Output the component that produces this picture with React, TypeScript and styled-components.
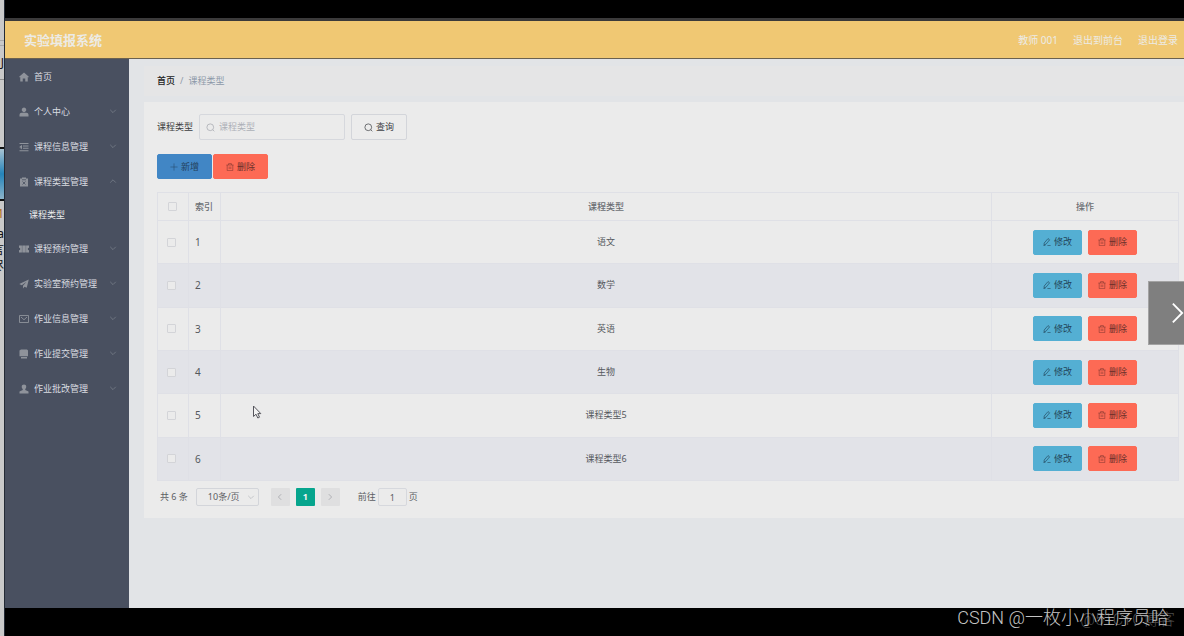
import React from "react";
import styled, { createGlobalStyle } from "styled-components";

const Global = createGlobalStyle`
  *, *::before, *::after { box-sizing: border-box; }
  body { margin: 0; background: #000; }
  body, button, input, select {
    font-family: "Noto Sans", "Noto Sans CJK SC", sans-serif;
    font-size: 9px;
    line-height: 14px;
  }
  button, input, select { margin: 0; padding: 0; border: 0; color: inherit; }
  a { color: inherit; text-decoration: none; }
`;

/* ---------- frame around the recording ---------- */

const Frame = styled.div`
  position: relative;
  display: flex;
  min-height: 100vh;
  background: #000;
`;

const Strip = styled.aside`
  flex: none;
  width: 5px;
  overflow: hidden;
  display: flex;
  flex-direction: column;
  background: #c9c9c9;
  border-right: 1px solid #232a35;
  font-size: 12px;
`;

const StripPart = styled.div<{ $h: number; $bg?: string; $line?: string; $color?: string }>`
  flex: none;
  height: ${(p) => p.$h}px;
  line-height: ${(p) => p.$h}px;
  background: ${(p) => p.$bg ?? "transparent"};
  border-bottom: ${(p) => (p.$line ? `1px solid ${p.$line}` : "0")};
  color: ${(p) => p.$color ?? "#111"};
  overflow: hidden;
  display: flex;
  justify-content: flex-end;
`;

const Screen = styled.div`
  flex: 1;
  min-width: 0;
  display: flex;
  flex-direction: column;
`;

const TopBar = styled.div`
  height: 21px;
  border-bottom: 3px solid #3b3a3b;
`;

const BottomBar = styled.footer`
  position: relative;
  height: 28px;
  padding-right: 15px;
  text-align: right;
  font-size: 18px;
  line-height: 20px;
  font-family: Roboto, "Noto Sans CJK SC", sans-serif;
  font-weight: 300;
  color: #c4c4c4;
`;

const FaintMark = styled.span`
  position: absolute;
  right: 9px;
  top: 2px;
  font-size: 16px;
  color: #4c4c4c;
`;

const BlackMark = styled.span`
  position: relative;
`;

const NextSlide = styled.button`
  position: absolute;
  right: 0;
  top: 281px;
  width: 36px;
  height: 64px;
  padding-left: 22px;
  display: flex;
  align-items: center;
  background: #7f7f7f;
  border: 1px solid #a3a3a3;
  border-right: 0;
  color: #fff;
  overflow: hidden;
`;

const Pointer = styled.svg`
  position: absolute;
  left: 252px;
  top: 405px;
`;

/* ---------- application shell ---------- */

const Header = styled.header`
  height: 38px;
  padding: 0 6px 0 19px;
  display: flex;
  align-items: center;
  justify-content: space-between;
  background: #f0c873;
  border-bottom: 1px solid #6a6150;
  color: #ecebe6;
`;

const Title = styled.h1`
  margin: 0;
  font-size: 13px;
  line-height: 20px;
  font-weight: 700;
`;

const UserNav = styled.nav`
  display: flex;
  gap: 15px;
  font-size: 10px;
`;

const Body = styled.div`
  flex: 1;
  display: flex;
`;

const Sidebar = styled.nav`
  flex: none;
  width: 124px;
  background: #495060;
  color: #dadde0;
`;

const MenuItem = styled.a`
  height: 35px;
  padding: 0 12px 0 14px;
  display: flex;
  align-items: center;
  gap: 5px;
  white-space: nowrap;
`;

const MenuLabel = styled.span`
  flex: 1;
`;

const MenuArrow = styled.span`
  display: flex;
  padding-bottom: 2px;
  color: #8b919b;
`;

const SubItem = styled.a`
  height: 32px;
  padding-left: 24px;
  display: flex;
  align-items: center;
  color: #eceded;
`;

const MenuIcon = styled.svg`
  flex: none;
  width: 10px;
  height: 10px;
  color: #8f939b;
`;

const Icon = styled.svg<{ $size: number }>`
  flex: none;
  width: ${(p) => p.$size}px;
  height: ${(p) => p.$size}px;
`;

const Main = styled.main`
  flex: 1;
  min-width: 0;
  padding: 7px 0 0 15px;
  background: #e2e4e7;
`;

const Breadcrumb = styled.nav`
  height: 30px;
  padding: 0 13px;
  display: flex;
  align-items: center;
  gap: 5px;
  background: #e5e5e6;
  color: #8d99a9;
`;

const Home = styled.a`
  font-weight: 500;
  color: #222;
`;

const Card = styled.section`
  margin-top: 6px;
  padding: 12px 5px 12px 13px;
  background: #ebebeb;
`;

const SearchRow = styled.form`
  display: flex;
  align-items: center;
  gap: 6px;
  color: #3c3d40;
`;

const SearchBox = styled.span`
  width: 146px;
  height: 26px;
  padding: 0 6px;
  display: flex;
  align-items: center;
  gap: 4px;
  border: 1px solid #d6d8dd;
  border-radius: 2px;
  color: #a4a7ae;
`;

const SearchInput = styled.input`
  flex: 1;
  min-width: 0;
  background: transparent;
  outline: none;
  &::placeholder { color: #adb0b8; opacity: 1; }
`;

const kinds = {
  plain: { bg: "#ececec", line: "#d3d5da", color: "#3f4246" },
  add: { bg: "#4186c5", line: "#4186c5", color: "#23415c" },
  edit: { bg: "#54afd3", line: "#54afd3", color: "#23465a" },
  remove: { bg: "#fd6a55", line: "#fd6a55", color: "#6b2f2a" },
};

const Button = styled.button<{ $kind: keyof typeof kinds; $width: number }>`
  width: ${(p) => p.$width}px;
  height: ${(p) => (p.$kind === "plain" ? 26 : 25)}px;
  display: inline-flex;
  align-items: center;
  justify-content: center;
  gap: 3px;
  border: 1px solid ${(p) => kinds[p.$kind].line};
  border-radius: 2px;
  background: ${(p) => kinds[p.$kind].bg};
  color: ${(p) => kinds[p.$kind].color};
`;

const Toolbar = styled.div`
  margin: 14px 0 13px;
  display: flex;
  gap: 1px;
`;

const Table = styled.table`
  width: 100%;
  height: 289px;
  table-layout: fixed;
  border-collapse: collapse;
  color: #55585d;
`;

const HeadCell = styled.th<{ $width?: number; $start?: number }>`
  width: ${(p) => (p.$width ? `${p.$width}px` : "auto")};
  height: 28px;
  padding: 0 0 0 ${(p) => p.$start ?? 0}px;
  border: 1px solid #dfe0e6;
  text-align: ${(p) => (p.$start ? "left" : "center")};
  font-weight: 500;
  color: #6c6f74;
`;

const Row = styled.tr`
  &:nth-child(even) { background: #e2e3e8; }
`;

const Cell = styled.td<{ $start?: number }>`
  height: 43px;
  padding: 0 0 0 ${(p) => p.$start ?? 0}px;
  border: 1px solid #dfe0e6;
  text-align: ${(p) => (p.$start ? "left" : "center")};
`;

const IndexCell = styled(Cell)`
  font-size: 10px;
`;

const Check = styled.input`
  appearance: none;
  display: block;
  width: 9px;
  height: 9px;
  border: 1px solid #d3d4d8;
  border-radius: 1px;
  background: #ebebeb;
`;

const Actions = styled.div`
  display: flex;
  justify-content: center;
  gap: 6px;
`;

const Pager = styled.div`
  margin-top: 7px;
  padding-left: 3px;
  height: 18px;
  display: flex;
  align-items: center;
  color: #5b5e63;
`;

const SizePicker = styled.span`
  position: relative;
  width: 63px;
  margin: 0 12px 0 8px;
  color: #b0b2b8;
`;

const SizeSelect = styled.select`
  appearance: none;
  display: block;
  width: 100%;
  height: 18px;
  padding-left: 11px;
  background: transparent;
  border: 1px solid #d3d5da;
  border-radius: 2px;
  color: #5b5e63;
`;

const PickerArrow = styled.span`
  position: absolute;
  right: 4px;
  top: 5px;
  display: flex;
  pointer-events: none;
`;

const PageButton = styled.button<{ $active?: boolean }>`
  width: 19px;
  height: 18px;
  margin-right: 6px;
  display: flex;
  align-items: center;
  justify-content: center;
  border-radius: 1px;
  font-weight: 700;
  background: ${(p) => (p.$active ? "#06a58d" : "#dfdfe0")};
  color: ${(p) => (p.$active ? "#f2f2f2" : "#a3a5aa")};
`;

const Jump = styled.label`
  margin-left: 12px;
  display: flex;
  align-items: center;
  gap: 2px;
`;

const JumpInput = styled.input`
  width: 29px;
  height: 18px;
  text-align: center;
  background: transparent;
  border: 1px solid #d6d8dd;
  border-radius: 2px;
`;

/* ---------- drawings ---------- */

const glyphs: Record<string, React.ReactNode> = {
  home: <path fill="currentColor" d="M10 1 0.300 9.700 1.500 11l1-.800V19h5v-6h5v6h5v-8.800l1 .800 1.200-1.300z" />,
  user: <path fill="currentColor" d="M10 1a4.600 4.600 0 0 1 2.800 8.200C11.500 10.800 8.500 10.800 7.200 9.200A4.600 4.600 0 0 1 10 1zM1 19v-3c0-3 2-4.500 4-4.500h10c2 0 4 1.500 4 4.500v3z" />,
  list: <path fill="none" stroke="currentColor" strokeWidth="2" d="M1 3h18M8 8h11M8 12.500h11M1 17.500h18M5 7v6.500L1.500 10.200z" />,
  clip: (
    <>
      <path fill="currentColor" d="M2 3h4V1h8v2h4v16H2z" />
      <path fill="none" stroke="#495060" strokeWidth="1.600" d="M6 5.500h8M7 9l6 6M13 9l-6 6" />
    </>
  ),
  ticket: (
    <>
      <path fill="currentColor" d="M0 3h20v4.500a2.500 2.500 0 0 0 0 5V17H0v-4.500a2.500 2.500 0 0 0 0-5z" />
      <path fill="none" stroke="#495060" strokeWidth="1.400" strokeDasharray="2 2" d="M6.500 3v14M13.500 3v14" />
    </>
  ),
  plane: <path fill="currentColor" d="M19.500 1 0.500 10l5 2.500L15 5.500 8 13.700V19l3-3.500 4.500 2z" />,
  mail: <path fill="none" stroke="currentColor" strokeWidth="1.800" d="M1 3h18v14H1zM4 6l6 5.500L16 6" />,
  printer: <path fill="currentColor" d="M4 1h12l2 2v11.500H1V3zM4 16h12v3H4z" />,
  person: <path fill="currentColor" d="M10 1c5.500 0 5.500 6.500 2.500 9.200V12l6.500 3v4H1v-4l6.500-3v-1.800C4.500 7.500 4.500 1 10 1z" />,
};

const Glyph = ({ name }: { name: string }) => (
  <MenuIcon viewBox="0 0 20 20" aria-hidden="true">{glyphs[name]}</MenuIcon>
);

const lines = {
  down: "M3 7l7 7 7-7",
  up: "M3 14l7-7 7 7",
  left: "M13 3l-7 7 7 7",
  right: "M7 3l7 7-7 7",
  search: "M9.500 2a7.500 7.500 0 1 0 0 15 7.500 7.500 0 0 0 0-15M15 15l3.500 3.500",
  plus: "M10 1v18M1 10h18",
  trash: "M1 5h18M6.500 5V1.500h7V5M3 5v14h14V5M8 9v6M12 9v6",
  pen: "M3 12.500 12.500 1.500l4 3L7.500 15.500 2.500 17zM1 19h5M11 19h8",
};

const Line = ({ name, size = 9, weight = 1.6 }: { name: keyof typeof lines; size?: number; weight?: number }) => (
  <Icon $size={size} viewBox="0 0 20 20" fill="none" stroke="currentColor" strokeWidth={weight} aria-hidden="true">
    <path d={lines[name]} />
  </Icon>
);

/* ---------- data ---------- */

const menu = [
  { label: "首页", icon: "home" },
  { label: "个人中心", icon: "user", arrow: "down" },
  { label: "课程信息管理", icon: "list", arrow: "down" },
  { label: "课程类型管理", icon: "clip", arrow: "up", child: "课程类型" },
  { label: "课程预约管理", icon: "ticket", arrow: "down" },
  { label: "实验室预约管理", icon: "plane", arrow: "down" },
  { label: "作业信息管理", icon: "mail", arrow: "down" },
  { label: "作业提交管理", icon: "printer", arrow: "down" },
  { label: "作业批改管理", icon: "person", arrow: "down" },
] as { label: string; icon: string; arrow?: "up" | "down"; child?: string }[];

const courses = ["语文", "数学", "英语", "生物", "课程类型5", "课程类型6"];

export default function App() {
  return (
    <Frame>
      <Global />
      <Strip aria-hidden="true">
        <StripPart $h={41} $line="#a9a9a9" />
        <StripPart $h={5} $line="#a9a9a9" />
        <StripPart $h={34} $line="#8f8f8f">J</StripPart>
        <StripPart $h={67} />
        <StripPart $h={2} $bg="#111" />
        <StripPart $h={50} $bg="linear-gradient(#a9c3d3, #2484ba 50%, #8db4ca)" />
        <StripPart $h={2} $bg="#111" />
        <StripPart $h={26} $color="#b06a1c">1</StripPart>
        <StripPart $h={14}>a</StripPart>
        <StripPart $h={17}>言</StripPart>
        <StripPart $h={16}>尽</StripPart>
      </Strip>
      <Screen>
        <TopBar />
        <Header>
          <Title>实验填报系统</Title>
          <UserNav>
            <span>教师 001</span>
            <a href="#front">退出到前台</a>
            <a href="#logout">退出登录</a>
          </UserNav>
        </Header>
        <Body>
          <Sidebar>
            {menu.map((m) => (
              <React.Fragment key={m.label}>
                <MenuItem href="#menu">
                  <Glyph name={m.icon} />
                  <MenuLabel>{m.label}</MenuLabel>
                  {m.arrow && (
                    <MenuArrow>
                      <Line name={m.arrow} size={8} weight={1.4} />
                    </MenuArrow>
                  )}
                </MenuItem>
                {m.child && <SubItem href="#type">{m.child}</SubItem>}
              </React.Fragment>
            ))}
          </Sidebar>
          <Main>
            <Breadcrumb>
              <Home href="#home">首页</Home>
              <span>/</span>
              <span>课程类型</span>
            </Breadcrumb>
            <Card>
              <SearchRow onSubmit={(e) => e.preventDefault()}>
                <label htmlFor="type">课程类型</label>
                <SearchBox>
                  <Line name="search" />
                  <SearchInput id="type" placeholder="课程类型" />
                </SearchBox>
                <Button $kind="plain" $width={56}>
                  <Line name="search" />
                  查询
                </Button>
              </SearchRow>
              <Toolbar>
                <Button $kind="add" $width={55}>
                  <Line name="plus" size={8} weight={1.2} />
                  新增
                </Button>
                <Button $kind="remove" $width={55}>
                  <Line name="trash" size={8} weight={1.2} />
                  删除
                </Button>
              </Toolbar>
              <Table>
                <thead>
                  <tr>
                    <HeadCell $width={31} $start={10}>
                      <Check type="checkbox" aria-label="全选" />
                    </HeadCell>
                    <HeadCell $width={32} $start={6}>索引</HeadCell>
                    <HeadCell>课程类型</HeadCell>
                    <HeadCell $width={187}>操作</HeadCell>
                  </tr>
                </thead>
                <tbody>
                  {courses.map((name, i) => (
                    <Row key={name}>
                      <Cell $start={9}>
                        <Check type="checkbox" aria-label={name} />
                      </Cell>
                      <IndexCell $start={6}>{i + 1}</IndexCell>
                      <Cell>{name}</Cell>
                      <Cell>
                        <Actions>
                          <Button $kind="edit" $width={49}>
                            <Line name="pen" size={8} />
                            修改
                          </Button>
                          <Button $kind="remove" $width={49}>
                            <Line name="trash" size={8} weight={1.2} />
                            删除
                          </Button>
                        </Actions>
                      </Cell>
                    </Row>
                  ))}
                </tbody>
              </Table>
              <Pager>
                <span>共 6 条</span>
                <SizePicker>
                  <SizeSelect aria-label="每页条数">
                    <option>10条/页</option>
                  </SizeSelect>
                  <PickerArrow>
                    <Line name="down" size={8} />
                  </PickerArrow>
                </SizePicker>
                <PageButton aria-label="上一页">
                  <Line name="left" size={8} weight={2} />
                </PageButton>
                <PageButton $active>1</PageButton>
                <PageButton aria-label="下一页">
                  <Line name="right" size={8} weight={2} />
                </PageButton>
                <Jump>
                  前往
                  <JumpInput defaultValue="1" />
                  页
                </Jump>
              </Pager>
            </Card>
          </Main>
        </Body>
        <BottomBar>
          <FaintMark>@51CTO博客</FaintMark>
          <BlackMark>CSDN @一枚小小程序员哈</BlackMark>
        </BottomBar>
      </Screen>
      <Pointer width="10" height="14" viewBox="0 0 10 14" aria-hidden="true">
        <path d="M1.500 1v10.500l2.500-2.300 1.800 3.800 1.700-.8-1.700-3.600h3z" fill="#f2f2f2" stroke="#55555c" />
      </Pointer>
      <NextSlide aria-label="下一张">
        <svg width="14" height="22" viewBox="0 0 14 22" fill="none" stroke="#fff" strokeWidth="2" aria-hidden="true">
          <path d="M2 1l10 10L2 21" />
        </svg>
      </NextSlide>
    </Frame>
  );
}
